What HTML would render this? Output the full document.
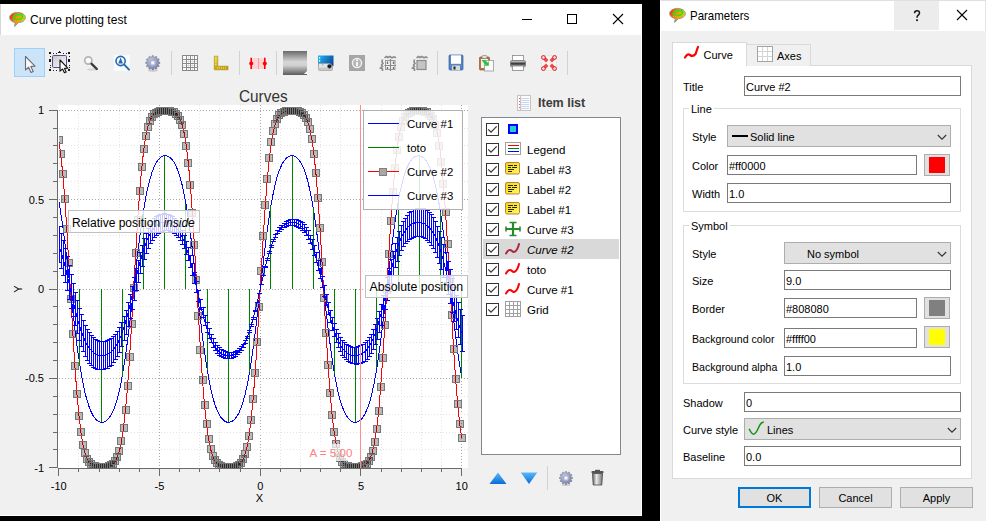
<!DOCTYPE html>
<html><head><meta charset="utf-8"><title>Curve plotting test</title>
<style>
*{margin:0;padding:0;box-sizing:border-box}
html,body{width:986px;height:521px;overflow:hidden;background:#000;font-family:"Liberation Sans",sans-serif;font-size:11px;color:#000;position:relative}
.a{position:absolute}
.t{position:absolute;white-space:nowrap;line-height:1}
.fld{position:absolute;background:#fff;border:1px solid #7a7a7a}
.fld span{position:absolute;left:3px;top:3px;white-space:nowrap;line-height:12px}
.cmb{position:absolute;background:#e1e1e1;border:1px solid #adadad}
.btn{position:absolute;background:#e1e1e1;border:1px solid #adadad;text-align:center;line-height:18px}
.grp{position:absolute;border:1px solid #dcdcdc}
.grp .lbl{position:absolute;top:-6px;left:5px;background:#fff;padding:0 2px;line-height:12px}
</style></head><body>
<!-- ================= LEFT WINDOW ================= -->
<div class="a" style="left:0;top:4px;width:642px;height:512px;background:#f0f0f0;border-right:1px solid #fff;border-bottom:1px solid #fff"></div>
<div class="a" style="left:0;top:4px;width:641px;height:31px;background:#fff;border-left:1px solid #d8d8d8"></div>
<svg class="a" style="left:9px;top:12px" width="17" height="15" viewBox="0 0 17 15"><defs><linearGradient id="gapp" x1="0" y1="0" x2="1" y2="0.3"><stop offset="0" stop-color="#ff1a00"/><stop offset="0.5" stop-color="#ff8a00"/><stop offset="1" stop-color="#d8d400"/></linearGradient></defs><path d="M8.5,0.6 C13.2,0.6 16.3,2.7 16.3,5.6 C16.3,8.4 13.4,10.4 9.4,10.6 L5.6,14.4 L6.3,10.5 C2.9,10 0.7,8 0.7,5.6 C0.7,2.7 3.8,0.6 8.5,0.6Z" fill="url(#gapp)" stroke="#8a8a8a" stroke-width="0.9"/><ellipse cx="9" cy="5.2" rx="4.6" ry="2.4" transform="rotate(-15 9 5.2)" fill="none" stroke="#20e820" stroke-width="1.6"/><path d="M4,8.6 H13" stroke="#ffa020" stroke-width="1" stroke-dasharray="1 1"/></svg>

<div class="t" style="left:30px;top:14px;font-size:12px">Curve plotting test</div>
<svg class="a" style="left:500px;top:4px" width="141" height="31" shape-rendering="crispEdges">
<line x1="22" y1="15.5" x2="32" y2="15.5" stroke="#000"/>
<rect x="67.5" y="10.5" width="9" height="9" fill="none" stroke="#000"/>
</svg>
<svg class="a" style="left:500px;top:4px" width="141" height="31">
<path d="M113,10 L123,20 M123,10 L113,20" stroke="#000" stroke-width="1.1"/>
</svg>

<!-- toolbar -->
<div class="a" style="left:14px;top:48px;width:31px;height:29px;background:#cce4f7;border:1px solid #99d1ff"></div>
<svg class="a" style="left:0;top:40px" width="642" height="45" viewBox="0 40 642 45">
<defs>
<linearGradient id="grul" x1="0" y1="0" x2="0.3" y2="1"><stop offset="0" stop-color="#e8d838"/><stop offset="1" stop-color="#c0a010"/></linearGradient>
<linearGradient id="gcm" x1="0" y1="0" x2="0" y2="1"><stop offset="0" stop-color="#6a6a6a"/><stop offset="0.45" stop-color="#d6d6d6"/><stop offset="0.6" stop-color="#d0d0d0"/><stop offset="1" stop-color="#5a5a5a"/></linearGradient>
<linearGradient id="gsel" x1="0" y1="0" x2="1" y2="1"><stop offset="0" stop-color="#c8c8c8"/><stop offset="1" stop-color="#fafafa"/></linearGradient>
<linearGradient id="gsnap" x1="0" y1="0.3" x2="1" y2="0.7"><stop offset="0" stop-color="#20b0f0"/><stop offset="1" stop-color="#0a4a98"/></linearGradient>
<radialGradient id="ginfo" cx="0.5" cy="0.5" r="0.7"><stop offset="0" stop-color="#d8d8d8"/><stop offset="1" stop-color="#909090"/></radialGradient>
<linearGradient id="gprn" x1="0" y1="0" x2="0" y2="1"><stop offset="0" stop-color="#f0f0f0"/><stop offset="0.5" stop-color="#303030"/><stop offset="1" stop-color="#e0e0e0"/></linearGradient>
<radialGradient id="ggear" cx="0.4" cy="0.35" r="0.7"><stop offset="0" stop-color="#c8cce0"/><stop offset="1" stop-color="#7078a0"/></radialGradient>
</defs>
<!-- 1 arrow cursor -->
<path d="M25.5,56.5 L25.5,70 L28.6,67.2 L31,72.5 L33.2,71.5 L30.9,66.4 L35,66.2 Z" fill="#fafafa" stroke="#6a6a78" stroke-width="1.1" stroke-linejoin="round"/>
<!-- 2 selection rect -->
<g fill="#1a1a1a" shape-rendering="crispEdges">
<rect x="49" y="52" width="2" height="2"/><rect x="68" y="52" width="2" height="2"/><rect x="49" y="69" width="2" height="2"/><rect x="68" y="69" width="2" height="2"/>
<rect x="58" y="52" width="3" height="1"/><rect x="59" y="51" width="1" height="1"/>
<rect x="49" y="59" width="2" height="3"/><rect x="68" y="59" width="2" height="3"/>
<rect x="53" y="53" width="1" height="1"/><rect x="56" y="53" width="1" height="1"/><rect x="63" y="53" width="1" height="1"/><rect x="66" y="53" width="1" height="1"/><rect x="53" y="70" width="1" height="1"/><rect x="56" y="70" width="1" height="1"/><rect x="65" y="70" width="1" height="1"/><rect x="50" y="56" width="1" height="1"/><rect x="69" y="56" width="1" height="1"/><rect x="50" y="65" width="1" height="1"/><rect x="69" y="65" width="1" height="1"/><rect x="50" y="67" width="1" height="1"/><rect x="69" y="67" width="1" height="1"/>
</g>
<rect x="52.5" y="55.5" width="14" height="12" rx="1.2" fill="url(#gsel)" stroke="#5a4c8c"/>
<path d="M60,60 L60,71.2 L62.6,69 L64.4,72.8 L66.2,72 L64.5,68.4 L67.8,68.2 Z" fill="#fff" stroke="#111" stroke-width="1.1" stroke-linejoin="round"/>
<!-- 3 magnifier -->
<ellipse cx="92" cy="69.5" rx="5" ry="1" fill="rgba(0,0,0,0.12)"/>
<circle cx="88.3" cy="60.5" r="3.6" fill="#fafafa" stroke="#b4b4b4" stroke-width="1.7"/>
<line x1="91.6" y1="63.8" x2="96.8" y2="69" stroke="#3a3a3a" stroke-width="2.4" stroke-linecap="round"/>
<!-- 4 autoscale -->
<rect x="114" y="55" width="16" height="16" fill="#f6fcff"/>
<circle cx="120.6" cy="61" r="4.6" fill="none" stroke="#2a68b0" stroke-width="1.6"/>
<path d="M118.2,63.6 L120.6,57.6 L123,63.6 Z" fill="#2a68b0"/>
<line x1="124.2" y1="64.6" x2="129" y2="69.6" stroke="#2a68b0" stroke-width="2" stroke-linecap="round"/>
<!-- 5 gear -->
<ellipse cx="152.8" cy="70.5" rx="5" ry="1.2" fill="rgba(0,0,0,0.15)"/>
<g transform="translate(152.8,62.8)">
<path d="M5.47,-1.22 L7.18,-0.53 L7.18,0.53 L5.47,1.22 L5.34,1.67 L6.48,3.13 L5.95,4.05 L4.12,3.79 L3.79,4.12 L4.05,5.95 L3.13,6.48 L1.67,5.34 L1.22,5.47 L0.53,7.18 L-0.53,7.18 L-1.22,5.47 L-1.67,5.34 L-3.13,6.48 L-4.05,5.95 L-3.79,4.12 L-4.12,3.79 L-5.95,4.05 L-6.48,3.13 L-5.34,1.67 L-5.47,1.22 L-7.18,0.53 L-7.18,-0.53 L-5.47,-1.22 L-5.34,-1.67 L-6.48,-3.13 L-5.95,-4.05 L-4.12,-3.79 L-3.79,-4.12 L-4.05,-5.95 L-3.13,-6.48 L-1.67,-5.34 L-1.22,-5.47 L-0.53,-7.18 L0.53,-7.18 L1.22,-5.47 L1.67,-5.34 L3.13,-6.48 L4.05,-5.95 L3.79,-4.12 L4.12,-3.79 L5.95,-4.05 L6.48,-3.13 L5.34,-1.67Z" fill="url(#ggear)" stroke="#6a7090" stroke-width="0.5"/>
<circle r="3.4" fill="#a8aed0"/>
<rect x="-1.6" y="-1.6" width="3.2" height="3.2" fill="#fafafa"/>
</g>
<!-- separator -->
<g fill="#d2d2d2"><rect x="171" y="51" width="1" height="24"/><rect x="239" y="51" width="1" height="24"/><rect x="276" y="51" width="1" height="24"/><rect x="437" y="51" width="1" height="24"/><rect x="567" y="51" width="1" height="24"/></g>
<!-- 6 grid -->
<g shape-rendering="crispEdges" fill="none">
<rect x="182.5" y="55.5" width="15" height="15" fill="#fff" stroke="#8a8a8a"/>
<path d="M188.5,56V70M192.5,56V70M183,61.5H197M183,65.5H197" stroke="#e0e0e0"/>
<path d="M186.5,56V70M190.5,56V70M194.5,56V70M183,59.5H197M183,63.5H197M183,67.5H197" stroke="#8a8a8a"/>
</g>
<!-- 7 ruler -->
<path d="M214.3,56.2 L217.8,56.2 L217.8,66.2 L228,66.2 L228,69.8 L214.3,69.8 Z" fill="url(#grul)" stroke="#a88a10" stroke-width="0.6"/>
<g fill="#f8f080"><rect x="215.3" y="58" width="1" height="1"/><rect x="215.3" y="60" width="1" height="1"/><rect x="215.3" y="62" width="1" height="1"/><rect x="215.3" y="64" width="1" height="1"/><rect x="217" y="67.5" width="1" height="1"/><rect x="219" y="67.5" width="1" height="1"/><rect x="221" y="67.5" width="1" height="1"/><rect x="223" y="67.5" width="1" height="1"/><rect x="225" y="67.5" width="1" height="1"/></g>
<!-- 8 range -->
<rect x="252" y="58" width="13" height="11" fill="#ffd4d4"/>
<path d="M258.5,58.5V69" stroke="#ff6060" stroke-dasharray="1 1"/>
<g stroke="#ff0000" stroke-width="1.6"><path d="M251.2,57.8V69M264.8,57.8V69"/></g>
<circle cx="251.2" cy="63.4" r="2" fill="#f00"/><circle cx="264.8" cy="63.4" r="2" fill="#f00"/>
<!-- 9 colormap -->
<rect x="283" y="51" width="24" height="24" fill="url(#gcm)"/>
<path d="M304,74 L307,71 L307,74 Z" fill="#fff"/>
<!-- 10 snapshot -->
<path d="M318,55.5 H333.5 V66 H318 Z" fill="url(#gsnap)"/>
<rect x="319" y="57" width="1.2" height="1.6" fill="#fff"/><rect x="319" y="60" width="1.2" height="1.6" fill="#fff"/>
<path d="M318.5,63.5 H330 L332.5,66 V69.5 Q332.5,70.5 331.5,70.5 H319.5 Q318.5,70.5 318.5,69.5 Z" fill="#e4e4e4" stroke="#9a9a9a" stroke-width="0.7"/>
<rect x="319" y="67.5" width="13" height="2.5" fill="#c8c8c8"/>
<circle cx="329.5" cy="66.3" r="2.1" fill="#1a1a1a" stroke="#888" stroke-width="0.5"/>
<rect x="322" y="64.5" width="1.5" height="1" fill="#40c0e0"/>
<!-- 11 info -->
<rect x="349" y="55" width="16" height="16" fill="#a6a6a6"/>
<circle cx="357" cy="63" r="4.6" fill="#b8b8b8" stroke="#f4f4f4" stroke-width="1.3"/>
<rect x="356.2" y="62" width="1.7" height="4.2" fill="#fff"/><rect x="356.2" y="59.4" width="1.7" height="1.6" fill="#fff"/>
<!-- 12/13 cross sections -->
<g fill="none" stroke="#8c8c8c">
<path d="M382.5,59.5 L382,62 L383,63.5 L381.5,65 L382.5,66.5 L380.5,68 L382.5,69 L382.5,71" stroke-width="1.6"/>
<path d="M384.5,57.8 L386.5,56.5 L388,57.5 L390,56.5 L392,57.8 L394,56.8 L396,57.8" stroke-width="1.6"/>
<rect x="385.5" y="60.5" width="9.5" height="9" fill="#f4f4f4" stroke="#9a9a9a" stroke-width="1"/>
<path d="M390.5,59V71M384.5,65.5H396" stroke="#8a8a8a" stroke-width="1.2"/>
<path d="M387.5,61.5V64M393.5,61.5V64M387.5,67V69M393.5,67V69" stroke="#707070" stroke-width="1.4"/>
<path d="M414.5,59.5 L414,62 L415,63.5 L413.5,65 L414.5,66.5 L412.5,68 L414.5,69 L414.5,71" stroke-width="1.6"/>
<path d="M416.5,57.8 L418.5,56.5 L420,57.5 L422,56.5 L424,57.8 L426,56.8 L427.5,57.8" stroke-width="1.6"/>
<rect x="417" y="60.5" width="9" height="9" fill="#c4c4c4" stroke="#8a8a8a" stroke-width="1.2"/>
</g>
<!-- 14 save -->
<rect x="449" y="55" width="14" height="15" rx="1" fill="#5884c4" stroke="#34609e" stroke-width="0.7"/>
<rect x="451" y="55.3" width="10" height="8.5" fill="#fff"/>
<rect x="452" y="65.5" width="8" height="4.5" fill="#d8d8d8"/><rect x="453.5" y="66.5" width="2" height="3" fill="#222"/>
<!-- 15 copy -->
<rect x="479.5" y="57" width="10" height="13" rx="1" fill="#b07840" stroke="#7a4a20" stroke-width="0.6"/>
<rect x="482" y="55.5" width="5" height="3" rx="1" fill="#e0e0e0" stroke="#666" stroke-width="0.5"/>
<rect x="481" y="59" width="7" height="9" fill="#f4f4f4"/>
<rect x="484.5" y="60.5" width="9" height="10.5" fill="#fafafa" stroke="#8a8a8a" stroke-width="0.7"/>
<path d="M481.5,60 L485,60 L487.5,62.5 L488.8,61.2 L488.8,65.8 L484.2,65.8 L485.5,64.5 L483,62 Z" fill="#30c040"/>
<!-- 16 printer -->
<rect x="512.5" y="55.5" width="11" height="5" fill="#fff" stroke="#888" stroke-width="0.8"/>
<rect x="510.5" y="60.5" width="15" height="6.5" rx="1.5" fill="url(#gprn)" stroke="#777" stroke-width="0.8"/>
<rect x="512.5" y="66" width="11" height="4.5" fill="#fff" stroke="#888" stroke-width="0.8"/>
<!-- 17 fullscreen -->
<rect x="541.5" y="55.5" width="15" height="15" rx="2.5" fill="#f4f4f4" stroke="#e0e0e0" stroke-width="0.6"/>
<g stroke="#f04848" stroke-width="3.4" stroke-linecap="butt"><path d="M543.8,57.8L547.2,61.2M554.2,57.8L550.8,61.2M543.8,68.2L547.2,64.8M554.2,68.2L550.8,64.8"/></g>
<g fill="#ffd0d0" stroke="#d42a2a" stroke-width="1"><circle cx="543.4" cy="57.4" r="1.9"/><circle cx="554.6" cy="57.4" r="1.9"/><circle cx="543.4" cy="68.6" r="1.9"/><circle cx="554.6" cy="68.6" r="1.9"/></g>
</svg>


<!-- plot -->
<svg class="a" style="left:0;top:0" width="642" height="516">
<rect x="58" y="105" width="410" height="363" fill="#fff"/>
<clipPath id="cc"><rect x="59" y="105" width="409" height="363"/></clipPath><g clip-path="url(#cc)"><g shape-rendering="crispEdges" stroke-width="1"><line x1="58.5" y1="104.5" x2="58.5" y2="468" stroke="#a8a8a8" stroke-dasharray="1 2"/><line x1="78.5" y1="104.5" x2="78.5" y2="468" stroke="#e4e4e4" stroke-dasharray="1 2"/><line x1="99.5" y1="104.5" x2="99.5" y2="468" stroke="#e4e4e4" stroke-dasharray="1 2"/><line x1="119.5" y1="104.5" x2="119.5" y2="468" stroke="#e4e4e4" stroke-dasharray="1 2"/><line x1="139.5" y1="104.5" x2="139.5" y2="468" stroke="#e4e4e4" stroke-dasharray="1 2"/><line x1="159.5" y1="104.5" x2="159.5" y2="468" stroke="#a8a8a8" stroke-dasharray="1 2"/><line x1="179.5" y1="104.5" x2="179.5" y2="468" stroke="#e4e4e4" stroke-dasharray="1 2"/><line x1="199.5" y1="104.5" x2="199.5" y2="468" stroke="#e4e4e4" stroke-dasharray="1 2"/><line x1="219.5" y1="104.5" x2="219.5" y2="468" stroke="#e4e4e4" stroke-dasharray="1 2"/><line x1="240.5" y1="104.5" x2="240.5" y2="468" stroke="#e4e4e4" stroke-dasharray="1 2"/><line x1="260.5" y1="104.5" x2="260.5" y2="468" stroke="#a8a8a8" stroke-dasharray="1 2"/><line x1="280.5" y1="104.5" x2="280.5" y2="468" stroke="#e4e4e4" stroke-dasharray="1 2"/><line x1="300.5" y1="104.5" x2="300.5" y2="468" stroke="#e4e4e4" stroke-dasharray="1 2"/><line x1="320.5" y1="104.5" x2="320.5" y2="468" stroke="#e4e4e4" stroke-dasharray="1 2"/><line x1="340.5" y1="104.5" x2="340.5" y2="468" stroke="#e4e4e4" stroke-dasharray="1 2"/><line x1="360.5" y1="104.5" x2="360.5" y2="468" stroke="#a8a8a8" stroke-dasharray="1 2"/><line x1="381.5" y1="104.5" x2="381.5" y2="468" stroke="#e4e4e4" stroke-dasharray="1 2"/><line x1="401.5" y1="104.5" x2="401.5" y2="468" stroke="#e4e4e4" stroke-dasharray="1 2"/><line x1="421.5" y1="104.5" x2="421.5" y2="468" stroke="#e4e4e4" stroke-dasharray="1 2"/><line x1="441.5" y1="104.5" x2="441.5" y2="468" stroke="#e4e4e4" stroke-dasharray="1 2"/><line x1="461.5" y1="104.5" x2="461.5" y2="468" stroke="#a8a8a8" stroke-dasharray="1 2"/><line x1="59" y1="449.5" x2="468" y2="449.5" stroke="#e4e4e4" stroke-dasharray="1 2"/><line x1="59" y1="432.5" x2="468" y2="432.5" stroke="#e4e4e4" stroke-dasharray="1 2"/><line x1="59" y1="414.5" x2="468" y2="414.5" stroke="#e4e4e4" stroke-dasharray="1 2"/><line x1="59" y1="396.5" x2="468" y2="396.5" stroke="#e4e4e4" stroke-dasharray="1 2"/><line x1="59" y1="378.5" x2="468" y2="378.5" stroke="#a8a8a8" stroke-dasharray="1 2"/><line x1="59" y1="360.5" x2="468" y2="360.5" stroke="#e4e4e4" stroke-dasharray="1 2"/><line x1="59" y1="342.5" x2="468" y2="342.5" stroke="#e4e4e4" stroke-dasharray="1 2"/><line x1="59" y1="324.5" x2="468" y2="324.5" stroke="#e4e4e4" stroke-dasharray="1 2"/><line x1="59" y1="306.5" x2="468" y2="306.5" stroke="#e4e4e4" stroke-dasharray="1 2"/><line x1="59" y1="289.5" x2="468" y2="289.5" stroke="#a8a8a8" stroke-dasharray="1 2"/><line x1="59" y1="271.5" x2="468" y2="271.5" stroke="#e4e4e4" stroke-dasharray="1 2"/><line x1="59" y1="253.5" x2="468" y2="253.5" stroke="#e4e4e4" stroke-dasharray="1 2"/><line x1="59" y1="235.5" x2="468" y2="235.5" stroke="#e4e4e4" stroke-dasharray="1 2"/><line x1="59" y1="217.5" x2="468" y2="217.5" stroke="#e4e4e4" stroke-dasharray="1 2"/><line x1="59" y1="199.5" x2="468" y2="199.5" stroke="#a8a8a8" stroke-dasharray="1 2"/><line x1="59" y1="181.5" x2="468" y2="181.5" stroke="#e4e4e4" stroke-dasharray="1 2"/><line x1="59" y1="163.5" x2="468" y2="163.5" stroke="#e4e4e4" stroke-dasharray="1 2"/><line x1="59" y1="145.5" x2="468" y2="145.5" stroke="#e4e4e4" stroke-dasharray="1 2"/><line x1="59" y1="128.5" x2="468" y2="128.5" stroke="#e4e4e4" stroke-dasharray="1 2"/><line x1="59" y1="110.5" x2="468" y2="110.5" stroke="#a8a8a8" stroke-dasharray="1 2"/></g>
<path d="M58.7,200.5 L60.7,212.6 L62.8,226.4 L64.8,241.8 L66.8,258.5 L68.8,276.0 L70.9,294.0 L72.9,311.8 L74.9,328.9 L76.9,344.9 L79.0,359.4 L81.0,372.3 L83.0,383.4 L85.0,392.8 L87.1,400.5 L89.1,406.8 L91.1,411.8 L93.1,415.6 L95.2,418.5 L97.2,420.5 L99.2,421.7 L101.2,422.3 L103.3,422.2 L105.3,421.4 L107.3,420.0 L109.3,417.7 L111.4,414.6 L113.4,410.5 L115.4,405.1 L117.4,398.4 L119.5,390.2 L121.5,380.3 L123.5,368.7 L125.5,355.3 L127.6,340.3 L129.6,323.9 L131.6,306.6 L133.6,288.7 L135.7,270.8 L137.7,253.5 L139.7,237.1 L141.8,222.2 L143.8,208.9 L145.8,197.3 L147.8,187.5 L149.9,179.3 L151.9,172.7 L153.9,167.4 L155.9,163.3 L158.0,160.2 L160.0,158.0 L162.0,156.5 L164.0,155.8 L166.1,155.7 L168.1,156.3 L170.1,157.6 L172.1,159.6 L174.2,162.5 L176.2,166.4 L178.2,171.4 L180.2,177.7 L182.3,185.5 L184.3,195.0 L186.3,206.1 L188.3,219.1 L190.4,233.7 L192.4,249.7 L194.4,266.9 L196.4,284.7 L198.5,302.6 L200.5,320.1 L202.5,336.7 L204.5,352.1 L206.6,365.8 L208.6,377.9 L210.6,388.1 L212.6,396.7 L214.7,403.7 L216.7,409.4 L218.7,413.8 L220.7,417.1 L222.8,419.5 L224.8,421.2 L226.8,422.1 L228.8,422.3 L230.9,421.9 L232.9,420.8 L234.9,419.0 L236.9,416.3 L239.0,412.7 L241.0,408.0 L243.0,402.1 L245.0,394.7 L247.1,385.6 L249.1,374.9 L251.1,362.4 L253.1,348.3 L255.2,332.6 L257.2,315.7 L259.2,298.0 L261.2,280.0 L263.3,262.3 L265.3,245.4 L267.3,229.7 L269.3,215.6 L271.4,203.1 L273.4,192.4 L275.4,183.3 L277.4,175.9 L279.5,170.0 L281.5,165.3 L283.5,161.7 L285.5,159.0 L287.6,157.2 L289.6,156.1 L291.6,155.7 L293.6,155.9 L295.7,156.8 L297.7,158.5 L299.7,160.9 L301.7,164.2 L303.8,168.6 L305.8,174.3 L307.8,181.3 L309.8,189.9 L311.9,200.1 L313.9,212.2 L315.9,225.9 L317.9,241.3 L320.0,257.9 L322.0,275.4 L324.0,293.3 L326.0,311.1 L328.1,328.3 L330.1,344.3 L332.1,358.9 L334.1,371.9 L336.2,383.0 L338.2,392.5 L340.2,400.3 L342.2,406.6 L344.3,411.6 L346.3,415.5 L348.3,418.4 L350.3,420.4 L352.4,421.7 L354.4,422.3 L356.4,422.2 L358.4,421.5 L360.5,420.0 L362.5,417.8 L364.5,414.7 L366.5,410.6 L368.6,405.3 L370.6,398.7 L372.6,390.5 L374.6,380.7 L376.7,369.1 L378.7,355.8 L380.7,340.9 L382.7,324.5 L384.8,307.2 L386.8,289.3 L388.8,271.4 L390.8,254.1 L392.9,237.7 L394.9,222.7 L396.9,209.3 L398.9,197.7 L401.0,187.8 L403.0,179.6 L405.0,172.9 L407.0,167.5 L409.1,163.4 L411.1,160.3 L413.1,158.0 L415.1,156.6 L417.2,155.8 L419.2,155.7 L421.2,156.3 L423.2,157.5 L425.3,159.5 L427.3,162.4 L429.3,166.2 L431.3,171.2 L433.4,177.5 L435.4,185.2 L437.4,194.6 L439.4,205.7 L441.5,218.6 L443.5,233.1 L445.5,249.1 L447.5,266.2 L449.6,284.0 L451.6,302.0 L453.6,319.5 L455.6,336.2 L457.7,351.6 L459.7,365.4 L461.7,377.5" fill="none" stroke="#0000ff" stroke-width="1" shape-rendering="crispEdges"/>
<path d="M58.5,289.0V200.5M79.5,289.0V365.7M101.5,289.0V422.3M122.5,289.0V375.6M143.5,289.0V210.2M164.5,289.0V155.7M185.5,289.0V204.3M207.5,289.0V369.8M228.5,289.0V422.3M249.5,289.0V371.8M270.5,289.0V206.2M292.5,289.0V155.7M313.5,289.0V208.2M334.5,289.0V373.7M355.5,289.0V422.3M376.5,289.0V367.8M398.5,289.0V202.4M419.5,289.0V155.7M440.5,289.0V212.3M461.5,289.0V377.5" fill="none" stroke="#008000" stroke-width="1" shape-rendering="crispEdges"/>
<path d="M58.7,139.6 L60.7,154.2 L62.8,173.8 L64.8,199.0 L66.8,229.2 L68.8,263.2 L70.9,298.9 L72.9,334.0 L74.9,366.1 L76.9,393.6 L79.0,415.7 L81.0,432.5 L83.0,444.6 L85.0,453.0 L87.1,458.5 L89.1,462.1 L91.1,464.3 L93.1,465.7 L95.2,466.5 L97.2,466.9 L99.2,467.1 L101.2,467.2 L103.3,467.2 L105.3,467.1 L107.3,466.8 L109.3,466.3 L111.4,465.3 L113.4,463.8 L115.4,461.2 L117.4,457.2 L119.5,450.9 L121.5,441.5 L123.5,428.1 L125.5,409.8 L127.6,386.1 L129.6,357.1 L131.6,323.9 L133.6,288.4 L135.7,252.9 L137.7,219.8 L139.7,191.0 L141.8,167.5 L143.8,149.4 L145.8,136.1 L147.8,126.9 L149.9,120.7 L151.9,116.7 L153.9,114.1 L155.9,112.6 L158.0,111.7 L160.0,111.2 L162.0,110.9 L164.0,110.8 L166.1,110.8 L168.1,110.9 L170.1,111.1 L172.1,111.6 L174.2,112.4 L176.2,113.7 L178.2,116.0 L180.2,119.6 L182.3,125.3 L184.3,133.7 L186.3,146.0 L188.3,163.0 L190.4,185.3 L192.4,212.9 L194.4,245.2 L196.4,280.3 L198.5,316.1 L200.5,350.0 L202.5,380.0 L204.5,404.9 L206.6,424.4 L208.6,438.9 L210.6,449.1 L212.6,456.0 L214.7,460.5 L216.7,463.3 L218.7,465.1 L220.7,466.1 L222.8,466.7 L224.8,467.0 L226.8,467.2 L228.8,467.2 L230.9,467.2 L232.9,467.0 L234.9,466.6 L236.9,465.9 L239.0,464.7 L241.0,462.7 L243.0,459.5 L245.0,454.4 L247.1,446.8 L249.1,435.6 L251.1,419.9 L253.1,399.0 L255.2,372.7 L257.2,341.5 L259.2,306.9 L261.2,271.1 L263.3,236.5 L265.3,205.3 L267.3,179.0 L269.3,158.1 L271.4,142.4 L273.4,131.2 L275.4,123.6 L277.4,118.5 L279.5,115.3 L281.5,113.3 L283.5,112.1 L285.5,111.4 L287.6,111.0 L289.6,110.8 L291.6,110.8 L293.6,110.8 L295.7,111.0 L297.7,111.3 L299.7,111.9 L301.7,112.9 L303.8,114.7 L305.8,117.5 L307.8,122.0 L309.8,128.9 L311.9,139.1 L313.9,153.6 L315.9,173.1 L317.9,198.0 L320.0,228.0 L322.0,261.9 L324.0,297.7 L326.0,332.8 L328.1,365.1 L330.1,392.7 L332.1,415.0 L334.1,432.0 L336.2,444.3 L338.2,452.7 L340.2,458.4 L342.2,462.0 L344.3,464.3 L346.3,465.6 L348.3,466.4 L350.3,466.9 L352.4,467.1 L354.4,467.2 L356.4,467.2 L358.4,467.1 L360.5,466.8 L362.5,466.3 L364.5,465.4 L366.5,463.9 L368.6,461.3 L370.6,457.3 L372.6,451.1 L374.6,441.9 L376.7,428.6 L378.7,410.5 L380.7,387.0 L382.7,358.2 L384.8,325.1 L386.8,289.6 L388.8,254.1 L390.8,220.9 L392.9,191.9 L394.9,168.2 L396.9,149.9 L398.9,136.5 L401.0,127.1 L403.0,120.8 L405.0,116.8 L407.0,114.2 L409.1,112.7 L411.1,111.7 L413.1,111.2 L415.1,110.9 L417.2,110.8 L419.2,110.8 L421.2,110.9 L423.2,111.1 L425.3,111.5 L427.3,112.3 L429.3,113.7 L431.3,115.9 L433.4,119.5 L435.4,125.0 L437.4,133.4 L439.4,145.5 L441.5,162.3 L443.5,184.4 L445.5,211.9 L447.5,244.0 L449.6,279.1 L451.6,314.8 L453.6,348.8 L455.6,379.0 L457.7,404.2 L459.7,423.8 L461.7,438.4" fill="none" stroke="#ff0000" stroke-width="1" shape-rendering="crispEdges"/>
<g fill="rgba(0,0,0,0.27)" stroke="#777" stroke-width="1" shape-rendering="crispEdges"><rect x="55.5" y="136.5" width="7" height="7"/><rect x="57.5" y="150.5" width="7" height="7"/><rect x="59.5" y="170.5" width="7" height="7"/><rect x="61.5" y="195.5" width="7" height="7"/><rect x="63.5" y="225.5" width="7" height="7"/><rect x="65.5" y="259.5" width="7" height="7"/><rect x="67.5" y="295.5" width="7" height="7"/><rect x="69.5" y="330.5" width="7" height="7"/><rect x="71.5" y="362.5" width="7" height="7"/><rect x="73.5" y="390.5" width="7" height="7"/><rect x="75.5" y="412.5" width="7" height="7"/><rect x="77.5" y="428.5" width="7" height="7"/><rect x="79.5" y="441.5" width="7" height="7"/><rect x="81.5" y="449.5" width="7" height="7"/><rect x="83.5" y="455.5" width="7" height="7"/><rect x="85.5" y="458.5" width="7" height="7"/><rect x="87.5" y="460.5" width="7" height="7"/><rect x="89.5" y="462.5" width="7" height="7"/><rect x="91.5" y="462.5" width="7" height="7"/><rect x="93.5" y="463.5" width="7" height="7"/><rect x="95.5" y="463.5" width="7" height="7"/><rect x="97.5" y="463.5" width="7" height="7"/><rect x="99.5" y="463.5" width="7" height="7"/><rect x="101.5" y="463.5" width="7" height="7"/><rect x="103.5" y="463.5" width="7" height="7"/><rect x="105.5" y="462.5" width="7" height="7"/><rect x="107.5" y="461.5" width="7" height="7"/><rect x="109.5" y="460.5" width="7" height="7"/><rect x="111.5" y="457.5" width="7" height="7"/><rect x="113.5" y="453.5" width="7" height="7"/><rect x="115.5" y="447.5" width="7" height="7"/><rect x="117.5" y="437.5" width="7" height="7"/><rect x="120.5" y="424.5" width="7" height="7"/><rect x="122.5" y="406.5" width="7" height="7"/><rect x="124.5" y="382.5" width="7" height="7"/><rect x="126.5" y="353.5" width="7" height="7"/><rect x="128.5" y="320.5" width="7" height="7"/><rect x="130.5" y="284.5" width="7" height="7"/><rect x="132.5" y="249.5" width="7" height="7"/><rect x="134.5" y="216.5" width="7" height="7"/><rect x="136.5" y="187.5" width="7" height="7"/><rect x="138.5" y="163.5" width="7" height="7"/><rect x="140.5" y="145.5" width="7" height="7"/><rect x="142.5" y="132.5" width="7" height="7"/><rect x="144.5" y="123.5" width="7" height="7"/><rect x="146.5" y="117.5" width="7" height="7"/><rect x="148.5" y="113.5" width="7" height="7"/><rect x="150.5" y="110.5" width="7" height="7"/><rect x="152.5" y="109.5" width="7" height="7"/><rect x="154.5" y="108.5" width="7" height="7"/><rect x="156.5" y="107.5" width="7" height="7"/><rect x="158.5" y="107.5" width="7" height="7"/><rect x="160.5" y="107.5" width="7" height="7"/><rect x="162.5" y="107.5" width="7" height="7"/><rect x="164.5" y="107.5" width="7" height="7"/><rect x="166.5" y="107.5" width="7" height="7"/><rect x="168.5" y="108.5" width="7" height="7"/><rect x="170.5" y="108.5" width="7" height="7"/><rect x="172.5" y="110.5" width="7" height="7"/><rect x="174.5" y="112.5" width="7" height="7"/><rect x="176.5" y="116.5" width="7" height="7"/><rect x="178.5" y="121.5" width="7" height="7"/><rect x="180.5" y="130.5" width="7" height="7"/><rect x="182.5" y="142.5" width="7" height="7"/><rect x="184.5" y="159.5" width="7" height="7"/><rect x="186.5" y="181.5" width="7" height="7"/><rect x="188.5" y="209.5" width="7" height="7"/><rect x="190.5" y="241.5" width="7" height="7"/><rect x="192.5" y="276.5" width="7" height="7"/><rect x="194.5" y="312.5" width="7" height="7"/><rect x="196.5" y="346.5" width="7" height="7"/><rect x="199.5" y="376.5" width="7" height="7"/><rect x="201.5" y="401.5" width="7" height="7"/><rect x="203.5" y="420.5" width="7" height="7"/><rect x="205.5" y="435.5" width="7" height="7"/><rect x="207.5" y="445.5" width="7" height="7"/><rect x="209.5" y="452.5" width="7" height="7"/><rect x="211.5" y="456.5" width="7" height="7"/><rect x="213.5" y="459.5" width="7" height="7"/><rect x="215.5" y="461.5" width="7" height="7"/><rect x="217.5" y="462.5" width="7" height="7"/><rect x="219.5" y="463.5" width="7" height="7"/><rect x="221.5" y="463.5" width="7" height="7"/><rect x="223.5" y="463.5" width="7" height="7"/><rect x="225.5" y="463.5" width="7" height="7"/><rect x="227.5" y="463.5" width="7" height="7"/><rect x="229.5" y="463.5" width="7" height="7"/><rect x="231.5" y="463.5" width="7" height="7"/><rect x="233.5" y="462.5" width="7" height="7"/><rect x="235.5" y="461.5" width="7" height="7"/><rect x="237.5" y="459.5" width="7" height="7"/><rect x="239.5" y="455.5" width="7" height="7"/><rect x="241.5" y="450.5" width="7" height="7"/><rect x="243.5" y="443.5" width="7" height="7"/><rect x="245.5" y="432.5" width="7" height="7"/><rect x="247.5" y="416.5" width="7" height="7"/><rect x="249.5" y="395.5" width="7" height="7"/><rect x="251.5" y="369.5" width="7" height="7"/><rect x="253.5" y="338.5" width="7" height="7"/><rect x="255.5" y="303.5" width="7" height="7"/><rect x="257.5" y="267.5" width="7" height="7"/><rect x="259.5" y="232.5" width="7" height="7"/><rect x="261.5" y="201.5" width="7" height="7"/><rect x="263.5" y="175.5" width="7" height="7"/><rect x="265.5" y="154.5" width="7" height="7"/><rect x="267.5" y="138.5" width="7" height="7"/><rect x="269.5" y="127.5" width="7" height="7"/><rect x="271.5" y="120.5" width="7" height="7"/><rect x="273.5" y="115.5" width="7" height="7"/><rect x="275.5" y="111.5" width="7" height="7"/><rect x="277.5" y="109.5" width="7" height="7"/><rect x="280.5" y="108.5" width="7" height="7"/><rect x="282.5" y="107.5" width="7" height="7"/><rect x="284.5" y="107.5" width="7" height="7"/><rect x="286.5" y="107.5" width="7" height="7"/><rect x="288.5" y="107.5" width="7" height="7"/><rect x="290.5" y="107.5" width="7" height="7"/><rect x="292.5" y="107.5" width="7" height="7"/><rect x="294.5" y="107.5" width="7" height="7"/><rect x="296.5" y="108.5" width="7" height="7"/><rect x="298.5" y="109.5" width="7" height="7"/><rect x="300.5" y="111.5" width="7" height="7"/><rect x="302.5" y="114.5" width="7" height="7"/><rect x="304.5" y="118.5" width="7" height="7"/><rect x="306.5" y="125.5" width="7" height="7"/><rect x="308.5" y="135.5" width="7" height="7"/><rect x="310.5" y="150.5" width="7" height="7"/><rect x="312.5" y="169.5" width="7" height="7"/><rect x="314.5" y="194.5" width="7" height="7"/><rect x="316.5" y="224.5" width="7" height="7"/><rect x="318.5" y="258.5" width="7" height="7"/><rect x="320.5" y="294.5" width="7" height="7"/><rect x="322.5" y="329.5" width="7" height="7"/><rect x="324.5" y="361.5" width="7" height="7"/><rect x="326.5" y="389.5" width="7" height="7"/><rect x="328.5" y="411.5" width="7" height="7"/><rect x="330.5" y="428.5" width="7" height="7"/><rect x="332.5" y="440.5" width="7" height="7"/><rect x="334.5" y="449.5" width="7" height="7"/><rect x="336.5" y="454.5" width="7" height="7"/><rect x="338.5" y="458.5" width="7" height="7"/><rect x="340.5" y="460.5" width="7" height="7"/><rect x="342.5" y="462.5" width="7" height="7"/><rect x="344.5" y="462.5" width="7" height="7"/><rect x="346.5" y="463.5" width="7" height="7"/><rect x="348.5" y="463.5" width="7" height="7"/><rect x="350.5" y="463.5" width="7" height="7"/><rect x="352.5" y="463.5" width="7" height="7"/><rect x="354.5" y="463.5" width="7" height="7"/><rect x="356.5" y="463.5" width="7" height="7"/><rect x="358.5" y="462.5" width="7" height="7"/><rect x="361.5" y="461.5" width="7" height="7"/><rect x="363.5" y="460.5" width="7" height="7"/><rect x="365.5" y="457.5" width="7" height="7"/><rect x="367.5" y="453.5" width="7" height="7"/><rect x="369.5" y="447.5" width="7" height="7"/><rect x="371.5" y="438.5" width="7" height="7"/><rect x="373.5" y="425.5" width="7" height="7"/><rect x="375.5" y="407.5" width="7" height="7"/><rect x="377.5" y="383.5" width="7" height="7"/><rect x="379.5" y="354.5" width="7" height="7"/><rect x="381.5" y="321.5" width="7" height="7"/><rect x="383.5" y="286.5" width="7" height="7"/><rect x="385.5" y="250.5" width="7" height="7"/><rect x="387.5" y="217.5" width="7" height="7"/><rect x="389.5" y="188.5" width="7" height="7"/><rect x="391.5" y="164.5" width="7" height="7"/><rect x="393.5" y="146.5" width="7" height="7"/><rect x="395.5" y="133.5" width="7" height="7"/><rect x="397.5" y="123.5" width="7" height="7"/><rect x="399.5" y="117.5" width="7" height="7"/><rect x="401.5" y="113.5" width="7" height="7"/><rect x="403.5" y="110.5" width="7" height="7"/><rect x="405.5" y="109.5" width="7" height="7"/><rect x="407.5" y="108.5" width="7" height="7"/><rect x="409.5" y="107.5" width="7" height="7"/><rect x="411.5" y="107.5" width="7" height="7"/><rect x="413.5" y="107.5" width="7" height="7"/><rect x="415.5" y="107.5" width="7" height="7"/><rect x="417.5" y="107.5" width="7" height="7"/><rect x="419.5" y="107.5" width="7" height="7"/><rect x="421.5" y="108.5" width="7" height="7"/><rect x="423.5" y="108.5" width="7" height="7"/><rect x="425.5" y="110.5" width="7" height="7"/><rect x="427.5" y="112.5" width="7" height="7"/><rect x="429.5" y="115.5" width="7" height="7"/><rect x="431.5" y="121.5" width="7" height="7"/><rect x="433.5" y="129.5" width="7" height="7"/><rect x="435.5" y="142.5" width="7" height="7"/><rect x="437.5" y="158.5" width="7" height="7"/><rect x="439.5" y="180.5" width="7" height="7"/><rect x="442.5" y="208.5" width="7" height="7"/><rect x="444.5" y="240.5" width="7" height="7"/><rect x="446.5" y="275.5" width="7" height="7"/><rect x="448.5" y="311.5" width="7" height="7"/><rect x="450.5" y="345.5" width="7" height="7"/><rect x="452.5" y="375.5" width="7" height="7"/><rect x="454.5" y="400.5" width="7" height="7"/><rect x="456.5" y="420.5" width="7" height="7"/><rect x="458.5" y="434.5" width="7" height="7"/></g>
<path d="M58.7,244.8 L60.7,250.8 L62.8,257.7 L64.8,265.4 L66.8,273.7 L68.8,282.5 L70.9,291.5 L72.9,300.4 L74.9,308.9 L76.9,316.9 L79.0,324.2 L81.0,330.6 L83.0,336.2 L85.0,340.9 L87.1,344.8 L89.1,347.9 L91.1,350.4 L93.1,352.3 L95.2,353.7 L97.2,354.7 L99.2,355.4 L101.2,355.6 L103.3,355.6 L105.3,355.2 L107.3,354.5 L109.3,353.4 L111.4,351.8 L113.4,349.7 L115.4,347.1 L117.4,343.7 L119.5,339.6 L121.5,334.7 L123.5,328.8 L125.5,322.1 L127.6,314.6 L129.6,306.5 L131.6,297.8 L133.6,288.8 L135.7,279.9 L137.7,271.2 L139.7,263.1 L141.8,255.6 L143.8,248.9 L145.8,243.2 L147.8,238.2 L149.9,234.2 L151.9,230.8 L153.9,228.2 L155.9,226.1 L158.0,224.6 L160.0,223.5 L162.0,222.8 L164.0,222.4 L166.1,222.4 L168.1,222.7 L170.1,223.3 L172.1,224.3 L174.2,225.7 L176.2,227.7 L178.2,230.2 L180.2,233.4 L182.3,237.3 L184.3,242.0 L186.3,247.6 L188.3,254.0 L190.4,261.3 L192.4,269.4 L194.4,277.9 L196.4,286.8 L198.5,295.8 L200.5,304.6 L202.5,312.9 L204.5,320.5 L206.6,327.4 L208.6,333.4 L210.6,338.6 L212.6,342.9 L214.7,346.4 L216.7,349.2 L218.7,351.4 L220.7,353.1 L222.8,354.3 L224.8,355.1 L226.8,355.5 L228.8,355.7 L230.9,355.5 L232.9,354.9 L234.9,354.0 L236.9,352.7 L239.0,350.9 L241.0,348.5 L243.0,345.5 L245.0,341.8 L247.1,337.3 L249.1,332.0 L251.1,325.7 L253.1,318.6 L255.2,310.8 L257.2,302.3 L259.2,293.5 L261.2,284.5 L263.3,275.7 L265.3,267.2 L267.3,259.4 L269.3,252.3 L271.4,246.0 L273.4,240.7 L275.4,236.2 L277.4,232.5 L279.5,229.5 L281.5,227.1 L283.5,225.3 L285.5,224.0 L287.6,223.1 L289.6,222.5 L291.6,222.3 L293.6,222.5 L295.7,222.9 L297.7,223.7 L299.7,224.9 L301.7,226.6 L303.8,228.8 L305.8,231.6 L307.8,235.1 L309.8,239.4 L311.9,244.6 L313.9,250.6 L315.9,257.5 L317.9,265.1 L320.0,273.4 L322.0,282.2 L324.0,291.2 L326.0,300.1 L328.1,308.6 L330.1,316.7 L332.1,324.0 L334.1,330.4 L336.2,336.0 L338.2,340.7 L340.2,344.6 L342.2,347.8 L344.3,350.3 L346.3,352.3 L348.3,353.7 L350.3,354.7 L352.4,355.3 L354.4,355.6 L356.4,355.6 L358.4,355.2 L360.5,354.5 L362.5,353.4 L364.5,351.9 L366.5,349.8 L368.6,347.2 L370.6,343.8 L372.6,339.8 L374.6,334.8 L376.7,329.1 L378.7,322.4 L380.7,314.9 L382.7,306.8 L384.8,298.1 L386.8,289.2 L388.8,280.2 L390.8,271.5 L392.9,263.4 L394.9,255.9 L396.9,249.2 L398.9,243.3 L401.0,238.4 L403.0,234.3 L405.0,230.9 L407.0,228.3 L409.1,226.2 L411.1,224.6 L413.1,223.5 L415.1,222.8 L417.2,222.4 L419.2,222.4 L421.2,222.6 L423.2,223.3 L425.3,224.3 L427.3,225.7 L429.3,227.6 L431.3,230.1 L433.4,233.2 L435.4,237.1 L437.4,241.8 L439.4,247.4 L441.5,253.8 L443.5,261.1 L445.5,269.1 L447.5,277.6 L449.6,286.5 L451.6,295.5 L453.6,304.3 L455.6,312.6 L457.7,320.3 L459.7,327.2 L461.7,333.2" fill="none" stroke="#0000ff" stroke-width="1" shape-rendering="crispEdges"/>
<path d="M59.5,263V226M57.0,262.5h5M57.0,226.5h5M61.5,269V233M59.0,268.5h5M59.0,233.5h5M63.5,276V240M61.0,275.5h5M61.0,240.5h5M65.5,283V248M63.0,282.5h5M63.0,248.5h5M67.5,291V256M65.0,290.5h5M65.0,256.5h5M69.5,300V265M67.0,299.5h5M67.0,265.5h5M71.5,309V274M69.0,308.5h5M69.0,274.5h5M73.5,317V283M71.0,316.5h5M71.0,283.5h5M75.5,326V292M73.0,325.5h5M73.0,292.5h5M77.5,334V300M75.0,333.5h5M75.0,300.5h5M79.5,341V308M77.0,340.5h5M77.0,308.5h5M81.5,347V314M79.0,346.5h5M79.0,314.5h5M83.5,352V320M81.0,351.5h5M81.0,320.5h5M85.5,357V325M83.0,356.5h5M83.0,325.5h5M87.5,361V329M85.0,360.5h5M85.0,329.5h5M89.5,364V332M87.0,363.5h5M87.0,332.5h5M91.5,366V335M89.0,365.5h5M89.0,335.5h5M93.5,368V337M91.0,367.5h5M91.0,337.5h5M95.5,369V339M93.0,368.5h5M93.0,339.5h5M97.5,370V340M95.0,369.5h5M95.0,340.5h5M99.5,370V341M97.0,369.5h5M97.0,341.5h5M101.5,370V341M99.0,369.5h5M99.0,341.5h5M103.5,370V341M101.0,369.5h5M101.0,341.5h5M105.5,369V341M103.0,368.5h5M103.0,341.5h5M107.5,369V340M105.0,368.5h5M105.0,340.5h5M109.5,367V339M107.0,366.5h5M107.0,339.5h5M111.5,366V338M109.0,365.5h5M109.0,338.5h5M113.5,363V336M111.0,362.5h5M111.0,336.5h5M115.5,360V334M113.0,359.5h5M113.0,334.5h5M117.5,357V331M115.0,356.5h5M115.0,331.5h5M119.5,353V327M117.0,352.5h5M117.0,327.5h5M121.5,347V322M119.0,346.5h5M119.0,322.5h5M124.5,341V316M122.0,340.5h5M122.0,316.5h5M126.5,335V310M124.0,334.5h5M124.0,310.5h5M128.5,327V302M126.0,326.5h5M126.0,302.5h5M130.5,319V294M128.0,318.5h5M128.0,294.5h5M132.5,310V286M130.0,309.5h5M130.0,286.5h5M134.5,301V277M132.0,300.5h5M132.0,277.5h5M136.5,291V268M134.0,290.5h5M134.0,268.5h5M138.5,283V260M136.0,282.5h5M136.0,260.5h5M140.5,274V252M138.0,273.5h5M138.0,252.5h5M142.5,267V245M140.0,266.5h5M140.0,245.5h5M144.5,260V238M142.0,259.5h5M142.0,238.5h5M146.5,254V233M144.0,253.5h5M144.0,233.5h5M148.5,249V228M146.0,248.5h5M146.0,228.5h5M150.5,244V224M148.0,243.5h5M148.0,224.5h5M152.5,241V221M150.0,240.5h5M150.0,221.5h5M154.5,238V218M152.0,237.5h5M152.0,218.5h5M156.5,236V216M154.0,235.5h5M154.0,216.5h5M158.5,234V215M156.0,233.5h5M156.0,215.5h5M160.5,233V214M158.0,232.5h5M158.0,214.5h5M162.5,232V214M160.0,231.5h5M160.0,214.5h5M164.5,231V213M162.0,230.5h5M162.0,213.5h5M166.5,231V214M164.0,230.5h5M164.0,214.5h5M168.5,231V214M166.0,230.5h5M166.0,214.5h5M170.5,232V215M168.0,231.5h5M168.0,215.5h5M172.5,233V216M170.0,232.5h5M170.0,216.5h5M174.5,234V218M172.0,233.5h5M172.0,218.5h5M176.5,236V220M174.0,235.5h5M174.0,220.5h5M178.5,238V222M176.0,237.5h5M176.0,222.5h5M180.5,241V226M178.0,240.5h5M178.0,226.5h5M182.5,245V230M180.0,244.5h5M180.0,230.5h5M184.5,249V235M182.0,248.5h5M182.0,235.5h5M186.5,255V241M184.0,254.5h5M184.0,241.5h5M188.5,261V247M186.0,260.5h5M186.0,247.5h5M190.5,268V255M188.0,267.5h5M188.0,255.5h5M192.5,276V263M190.0,275.5h5M190.0,263.5h5M194.5,284V272M192.0,283.5h5M192.0,272.5h5M196.5,293V281M194.0,292.5h5M194.0,281.5h5M198.5,302V290M196.0,301.5h5M196.0,290.5h5M200.5,310V299M198.0,309.5h5M198.0,299.5h5M203.5,318V307M201.0,317.5h5M201.0,307.5h5M205.5,326V315M203.0,325.5h5M203.0,315.5h5M207.5,333V322M205.0,332.5h5M205.0,322.5h5M209.5,339V328M207.0,338.5h5M207.0,328.5h5M211.5,343V334M209.0,342.5h5M209.0,334.5h5M213.5,348V338M211.0,347.5h5M211.0,338.5h5M215.5,351V342M213.0,350.5h5M213.0,342.5h5M217.5,354V345M215.0,353.5h5M215.0,345.5h5M219.5,356V347M217.0,355.5h5M217.0,347.5h5M221.5,357V349M219.0,356.5h5M219.0,349.5h5M223.5,358V350M221.0,357.5h5M221.0,350.5h5M225.5,359V351M223.0,358.5h5M223.0,351.5h5M227.5,359V352M225.0,358.5h5M225.0,352.5h5M229.5,359V352M227.0,358.5h5M227.0,352.5h5M231.5,359V352M229.0,358.5h5M229.0,352.5h5M233.5,358V352M231.0,357.5h5M231.0,352.5h5M235.5,357V351M233.0,356.5h5M233.0,351.5h5M237.5,355V350M235.0,354.5h5M235.0,350.5h5M239.5,353V348M237.0,352.5h5M237.0,348.5h5M241.5,351V346M239.0,350.5h5M239.0,346.5h5M243.5,348V344M241.0,347.5h5M241.0,344.5h5M245.5,344V340M243.0,343.5h5M243.0,340.5h5M247.5,339V336M245.0,338.5h5M245.0,336.5h5M249.5,333V330M247.0,332.5h5M247.0,330.5h5M251.5,327V324M249.0,326.5h5M249.0,324.5h5M253.5,320V317M251.0,319.5h5M251.0,317.5h5M255.5,312V310M253.0,311.5h5M253.0,310.5h5M257.5,303V302M255.0,302.5h5M255.0,302.5h5M259.5,294V293M257.0,293.5h5M257.0,293.5h5M261.5,285V284M259.0,284.5h5M259.0,284.5h5M263.5,276V275M261.0,275.5h5M261.0,275.5h5M265.5,268V266M263.0,267.5h5M263.0,266.5h5M267.5,261V258M265.0,260.5h5M265.0,258.5h5M269.5,254V251M267.0,253.5h5M267.0,251.5h5M271.5,248V245M269.0,247.5h5M269.0,245.5h5M273.5,242V239M271.0,241.5h5M271.0,239.5h5M275.5,238V234M273.0,237.5h5M273.0,234.5h5M277.5,234V230M275.0,233.5h5M275.0,230.5h5M279.5,232V227M277.0,231.5h5M277.0,227.5h5M281.5,230V225M279.0,229.5h5M279.0,225.5h5M284.5,228V223M282.0,227.5h5M282.0,223.5h5M286.5,227V221M284.0,226.5h5M284.0,221.5h5M288.5,226V220M286.0,225.5h5M286.0,220.5h5M290.5,226V219M288.0,225.5h5M288.0,219.5h5M292.5,226V219M290.0,225.5h5M290.0,219.5h5M294.5,226V219M292.0,225.5h5M292.0,219.5h5M296.5,227V219M294.0,226.5h5M294.0,219.5h5M298.5,228V220M296.0,227.5h5M296.0,220.5h5M300.5,229V221M298.0,228.5h5M298.0,221.5h5M302.5,231V222M300.0,230.5h5M300.0,222.5h5M304.5,233V224M302.0,232.5h5M302.0,224.5h5M306.5,236V227M304.0,235.5h5M304.0,227.5h5M308.5,240V230M306.0,239.5h5M306.0,230.5h5M310.5,244V235M308.0,243.5h5M308.0,235.5h5M312.5,250V239M310.0,249.5h5M310.0,239.5h5M314.5,256V245M312.0,255.5h5M312.0,245.5h5M316.5,263V252M314.0,262.5h5M314.0,252.5h5M318.5,271V260M316.0,270.5h5M316.0,260.5h5M320.5,279V268M318.0,278.5h5M318.0,268.5h5M322.5,288V276M320.0,287.5h5M320.0,276.5h5M324.5,297V285M322.0,296.5h5M322.0,285.5h5M326.5,306V294M324.0,305.5h5M324.0,294.5h5M328.5,315V302M326.0,314.5h5M326.0,302.5h5M330.5,323V310M328.0,322.5h5M328.0,310.5h5M332.5,331V317M330.0,330.5h5M330.0,317.5h5M334.5,337V323M332.0,336.5h5M332.0,323.5h5M336.5,343V329M334.0,342.5h5M334.0,329.5h5M338.5,348V333M336.0,347.5h5M336.0,333.5h5M340.5,352V337M338.0,351.5h5M338.0,337.5h5M342.5,356V340M340.0,355.5h5M340.0,340.5h5M344.5,358V342M342.0,357.5h5M342.0,342.5h5M346.5,360V344M344.0,359.5h5M344.0,344.5h5M348.5,362V345M346.0,361.5h5M346.0,345.5h5M350.5,363V346M348.0,362.5h5M348.0,346.5h5M352.5,364V347M350.0,363.5h5M350.0,347.5h5M354.5,364V347M352.0,363.5h5M352.0,347.5h5M356.5,365V347M354.0,364.5h5M354.0,347.5h5M358.5,364V346M356.0,363.5h5M356.0,346.5h5M360.5,364V345M358.0,363.5h5M358.0,345.5h5M362.5,363V344M360.0,362.5h5M360.0,344.5h5M365.5,362V342M363.0,361.5h5M363.0,342.5h5M367.5,360V340M365.0,359.5h5M365.0,340.5h5M369.5,357V337M367.0,356.5h5M367.0,337.5h5M371.5,354V334M369.0,353.5h5M369.0,334.5h5M373.5,350V329M371.0,349.5h5M371.0,329.5h5M375.5,345V324M373.0,344.5h5M373.0,324.5h5M377.5,340V318M375.0,339.5h5M375.0,318.5h5M379.5,333V311M377.0,332.5h5M377.0,311.5h5M381.5,326V304M379.0,325.5h5M379.0,304.5h5M383.5,318V295M381.0,317.5h5M381.0,295.5h5M385.5,310V287M383.0,309.5h5M383.0,287.5h5M387.5,301V277M385.0,300.5h5M385.0,277.5h5M389.5,292V268M387.0,291.5h5M387.0,268.5h5M391.5,284V259M389.0,283.5h5M389.0,259.5h5M393.5,276V251M391.0,275.5h5M391.0,251.5h5M395.5,268V243M393.0,267.5h5M393.0,243.5h5M397.5,262V237M395.0,261.5h5M395.0,237.5h5M399.5,256V231M397.0,255.5h5M397.0,231.5h5M401.5,251V225M399.0,250.5h5M399.0,225.5h5M403.5,247V221M401.0,246.5h5M401.0,221.5h5M405.5,244V218M403.0,243.5h5M403.0,218.5h5M407.5,242V215M405.0,241.5h5M405.0,215.5h5M409.5,240V212M407.0,239.5h5M407.0,212.5h5M411.5,239V211M409.0,238.5h5M409.0,211.5h5M413.5,238V209M411.0,237.5h5M411.0,209.5h5M415.5,237V209M413.0,236.5h5M413.0,209.5h5M417.5,237V208M415.0,236.5h5M415.0,208.5h5M419.5,237V208M417.0,236.5h5M417.0,208.5h5M421.5,237V208M419.0,236.5h5M419.0,208.5h5M423.5,238V208M421.0,237.5h5M421.0,208.5h5M425.5,239V209M423.0,238.5h5M423.0,209.5h5M427.5,241V210M425.0,240.5h5M425.0,210.5h5M429.5,243V212M427.0,242.5h5M427.0,212.5h5M431.5,246V214M429.0,245.5h5M429.0,214.5h5M433.5,249V217M431.0,248.5h5M431.0,217.5h5M435.5,253V221M433.0,252.5h5M433.0,221.5h5M437.5,258V226M435.0,257.5h5M435.0,226.5h5M439.5,264V231M437.0,263.5h5M437.0,231.5h5M441.5,270V237M439.0,269.5h5M439.0,237.5h5M443.5,278V244M441.0,277.5h5M441.0,244.5h5M446.5,286V252M444.0,285.5h5M444.0,252.5h5M448.5,295V261M446.0,294.5h5M446.0,261.5h5M450.5,304V269M448.0,303.5h5M448.0,269.5h5M452.5,313V278M450.0,312.5h5M450.0,278.5h5M454.5,322V287M452.0,321.5h5M452.0,287.5h5M456.5,330V295M454.0,329.5h5M454.0,295.5h5M458.5,338V302M456.0,337.5h5M456.0,302.5h5M460.5,345V309M458.0,344.5h5M458.0,309.5h5M462.5,352V315M460.0,351.5h5M460.0,315.5h5" fill="none" stroke="#0000ff" stroke-width="1" shape-rendering="crispEdges"/><!-- label inside -->
<rect x="68.5" y="210.5" width="131" height="22" fill="rgba(255,255,255,0.8)" stroke="#c0c0c0" shape-rendering="crispEdges"/>
<text x="72" y="227" font-family="Liberation Sans" font-size="12" fill="#000">Relative position <tspan font-style="italic">inside</tspan></text>
<!-- absolute -->
<rect x="365.5" y="275.5" width="102" height="22" fill="rgba(255,255,255,0.8)" stroke="#c0c0c0" shape-rendering="crispEdges"/>
<text x="369.5" y="291" font-family="Liberation Sans" font-size="12.3" fill="#000">Absolute position</text>
<!-- legend -->
<rect x="363.5" y="110.5" width="99" height="99" fill="rgba(255,255,255,0.85)" stroke="#b0b0b0" shape-rendering="crispEdges"/>
<g shape-rendering="crispEdges">
<line x1="368" y1="123.5" x2="399" y2="123.5" stroke="#0000ff" stroke-width="1.5"/>
<line x1="368" y1="147.5" x2="399" y2="147.5" stroke="#008000" stroke-width="1.5"/>
<line x1="368" y1="171.5" x2="399" y2="171.5" stroke="#ff0000" stroke-width="1.5"/>
<rect x="379.5" y="168.5" width="7" height="7" fill="#a8a8a8" stroke="#808080"/>
<line x1="368" y1="195.5" x2="399" y2="195.5" stroke="#0000ff" stroke-width="1.5"/>
</g>
<g font-family="Liberation Sans" font-size="11.4" fill="#000">
<text x="407" y="128">Curve #1</text>
<text x="407" y="152">toto</text>
<text x="407" y="176">Curve #2</text>
<text x="407" y="200">Curve #3</text>
</g>
<!-- marker -->
<line x1="360.5" y1="105" x2="360.5" y2="468" stroke="#ff8c8c" shape-rendering="crispEdges"/>
<rect x="306" y="444" width="50" height="17" fill="rgba(255,255,255,0.7)"/>
<text x="309.5" y="457" font-family="Liberation Sans" font-size="11.6" fill="#ff8080">A = 5.00</text>
</g>
<g shape-rendering="crispEdges" stroke-width="1"><line x1="57.5" y1="110" x2="57.5" y2="468" stroke="#6a6a6a"/><line x1="49" y1="467.5" x2="57" y2="467.5" stroke="#6a6a6a"/><line x1="53" y1="449.5" x2="57" y2="449.5" stroke="#6a6a6a"/><line x1="53" y1="432.5" x2="57" y2="432.5" stroke="#6a6a6a"/><line x1="53" y1="414.5" x2="57" y2="414.5" stroke="#6a6a6a"/><line x1="53" y1="396.5" x2="57" y2="396.5" stroke="#6a6a6a"/><line x1="49" y1="378.5" x2="57" y2="378.5" stroke="#6a6a6a"/><line x1="53" y1="360.5" x2="57" y2="360.5" stroke="#6a6a6a"/><line x1="53" y1="342.5" x2="57" y2="342.5" stroke="#6a6a6a"/><line x1="53" y1="324.5" x2="57" y2="324.5" stroke="#6a6a6a"/><line x1="53" y1="306.5" x2="57" y2="306.5" stroke="#6a6a6a"/><line x1="49" y1="289.5" x2="57" y2="289.5" stroke="#6a6a6a"/><line x1="53" y1="271.5" x2="57" y2="271.5" stroke="#6a6a6a"/><line x1="53" y1="253.5" x2="57" y2="253.5" stroke="#6a6a6a"/><line x1="53" y1="235.5" x2="57" y2="235.5" stroke="#6a6a6a"/><line x1="53" y1="217.5" x2="57" y2="217.5" stroke="#6a6a6a"/><line x1="49" y1="199.5" x2="57" y2="199.5" stroke="#6a6a6a"/><line x1="53" y1="181.5" x2="57" y2="181.5" stroke="#6a6a6a"/><line x1="53" y1="163.5" x2="57" y2="163.5" stroke="#6a6a6a"/><line x1="53" y1="145.5" x2="57" y2="145.5" stroke="#6a6a6a"/><line x1="53" y1="128.5" x2="57" y2="128.5" stroke="#6a6a6a"/><line x1="49" y1="110.5" x2="57" y2="110.5" stroke="#6a6a6a"/><line x1="58" y1="468.5" x2="462" y2="468.5" stroke="#6a6a6a"/><line x1="58.5" y1="468" x2="58.5" y2="476" stroke="#6a6a6a"/><line x1="78.5" y1="468" x2="78.5" y2="472" stroke="#6a6a6a"/><line x1="99.5" y1="468" x2="99.5" y2="472" stroke="#6a6a6a"/><line x1="119.5" y1="468" x2="119.5" y2="472" stroke="#6a6a6a"/><line x1="139.5" y1="468" x2="139.5" y2="472" stroke="#6a6a6a"/><line x1="159.5" y1="468" x2="159.5" y2="476" stroke="#6a6a6a"/><line x1="179.5" y1="468" x2="179.5" y2="472" stroke="#6a6a6a"/><line x1="199.5" y1="468" x2="199.5" y2="472" stroke="#6a6a6a"/><line x1="219.5" y1="468" x2="219.5" y2="472" stroke="#6a6a6a"/><line x1="240.5" y1="468" x2="240.5" y2="472" stroke="#6a6a6a"/><line x1="260.5" y1="468" x2="260.5" y2="476" stroke="#6a6a6a"/><line x1="280.5" y1="468" x2="280.5" y2="472" stroke="#6a6a6a"/><line x1="300.5" y1="468" x2="300.5" y2="472" stroke="#6a6a6a"/><line x1="320.5" y1="468" x2="320.5" y2="472" stroke="#6a6a6a"/><line x1="340.5" y1="468" x2="340.5" y2="472" stroke="#6a6a6a"/><line x1="360.5" y1="468" x2="360.5" y2="476" stroke="#6a6a6a"/><line x1="381.5" y1="468" x2="381.5" y2="472" stroke="#6a6a6a"/><line x1="401.5" y1="468" x2="401.5" y2="472" stroke="#6a6a6a"/><line x1="421.5" y1="468" x2="421.5" y2="472" stroke="#6a6a6a"/><line x1="441.5" y1="468" x2="441.5" y2="472" stroke="#6a6a6a"/><line x1="461.5" y1="468" x2="461.5" y2="476" stroke="#6a6a6a"/></g>
<g font-family="Liberation Sans" font-size="11" fill="#000"><text x="44" y="114.2" text-anchor="end">1</text><text x="44" y="203.6" text-anchor="end">0.5</text><text x="44" y="293.0" text-anchor="end">0</text><text x="44" y="382.4" text-anchor="end">-0.5</text><text x="44" y="471.8" text-anchor="end">-1</text><text x="58.7" y="489.5" text-anchor="middle">-10</text><text x="159.5" y="489.5" text-anchor="middle">-5</text><text x="260.2" y="489.5" text-anchor="middle">0</text><text x="361.0" y="489.5" text-anchor="middle">5</text><text x="461.7" y="489.5" text-anchor="middle">10</text><text x="259.5" y="502" text-anchor="middle">X</text><text transform="translate(22,289) rotate(-90)" text-anchor="middle">Y</text></g><text x="239" y="102" font-family="Liberation Sans" font-size="16.6" fill="#333" textLength="48.6" lengthAdjust="spacingAndGlyphs">Curves</text>
</svg>

<!-- item list -->
<div class="a" style="left:481px;top:117px;width:140px;height:338px;background:#fff;border:1px solid #828790"></div>
<div class="a" style="left:483px;top:239px;width:136px;height:20px;background:#d9d9d9"></div>
<svg class="a" style="left:517px;top:95px" width="15" height="16" shape-rendering="crispEdges"><rect x="0.5" y="0.5" width="13" height="14.5" fill="#fbfbfb" stroke="#c4c4c4"/><g stroke="#c4daf2"><path d="M3,3.5H12M3,5.5H12M3,7.5H12M3,9.5H12M3,11.5H12M3,13.5H12"/></g><path d="M3.5,1V15" stroke="#f4b0b0"/><g fill="#888"><rect x="2" y="3" width="1" height="1"/><rect x="2" y="6" width="1" height="1"/><rect x="2" y="9" width="1" height="1"/><rect x="2" y="12" width="1" height="1"/></g></svg>
<div class="t" style="left:538px;top:97px;font-size:12.5px;font-weight:bold;color:#3c3c3c">Item list</div>
<svg class="a" style="left:0;top:0" width="642" height="516"><defs><linearGradient id="glab" x1="0" y1="0" x2="1" y2="1"><stop offset="0" stop-color="#f0d800"/><stop offset="1" stop-color="#fff870"/></linearGradient></defs><rect x="486.5" y="123.5" width="12" height="12" fill="#fff" stroke="#333" shape-rendering="crispEdges"/><path d="M488.2,129.4 L491,132.2 L496.7,126.4" fill="none" stroke="#333" stroke-width="1.2"/><rect x="509" y="125" width="8" height="8" fill="#20d0d0" stroke="#0000ff" stroke-width="2"/><rect x="486.5" y="143.5" width="12" height="12" fill="#fff" stroke="#333" shape-rendering="crispEdges"/><path d="M488.2,149.4 L491,152.2 L496.7,146.4" fill="none" stroke="#333" stroke-width="1.2"/><rect x="505.5" y="142.5" width="15" height="12" fill="#fff" stroke="#a0a0a0" shape-rendering="crispEdges"/><path d="M507.5,145.5H518.5" stroke="#ff0000" shape-rendering="crispEdges"/><path d="M507.5,148.5H518.5" stroke="#008000" shape-rendering="crispEdges"/><path d="M507.5,151.5H518.5" stroke="#0000ff" shape-rendering="crispEdges"/><rect x="486.5" y="163.5" width="12" height="12" fill="#fff" stroke="#333" shape-rendering="crispEdges"/><path d="M488.2,169.4 L491,172.2 L496.7,166.4" fill="none" stroke="#333" stroke-width="1.2"/><rect x="505.5" y="162.5" width="14" height="11.5" rx="1.5" fill="url(#glab)" stroke="#c0803c"/><path d="M508,165.5H513M514,165.5H517M508,167.5H511M512,167.5H517M508,169.5H514M508,171.5H512" stroke="#2a2400" stroke-width="1" shape-rendering="crispEdges"/><rect x="486.5" y="183.5" width="12" height="12" fill="#fff" stroke="#333" shape-rendering="crispEdges"/><path d="M488.2,189.4 L491,192.2 L496.7,186.4" fill="none" stroke="#333" stroke-width="1.2"/><rect x="505.5" y="182.5" width="14" height="11.5" rx="1.5" fill="url(#glab)" stroke="#c0803c"/><path d="M508,185.5H513M514,185.5H517M508,187.5H511M512,187.5H517M508,189.5H514M508,191.5H512" stroke="#2a2400" stroke-width="1" shape-rendering="crispEdges"/><rect x="486.5" y="203.5" width="12" height="12" fill="#fff" stroke="#333" shape-rendering="crispEdges"/><path d="M488.2,209.4 L491,212.2 L496.7,206.4" fill="none" stroke="#333" stroke-width="1.2"/><rect x="505.5" y="202.5" width="14" height="11.5" rx="1.5" fill="url(#glab)" stroke="#c0803c"/><path d="M508,205.5H513M514,205.5H517M508,207.5H511M512,207.5H517M508,209.5H514M508,211.5H512" stroke="#2a2400" stroke-width="1" shape-rendering="crispEdges"/><rect x="486.5" y="223.5" width="12" height="12" fill="#fff" stroke="#333" shape-rendering="crispEdges"/><path d="M488.2,229.4 L491,232.2 L496.7,226.4" fill="none" stroke="#333" stroke-width="1.2"/><g stroke="#2a8a2a" stroke-width="2.2" fill="none"><path d="M513,222V236M506,229H520"/><path d="M509.5,222.5H516.5M509.5,235.5H516.5M506,226.5V231.5M520,226.5V231.5" stroke-width="1.6"/></g><rect x="486.5" y="243.5" width="12" height="12" fill="#fff" stroke="#333" shape-rendering="crispEdges"/><path d="M488.2,249.4 L491,252.2 L496.7,246.4" fill="none" stroke="#333" stroke-width="1.2"/><path d="M506,253.5 C508,250 510,249 512,251 C514,253 517,252 519,244" fill="none" stroke="#b02848" stroke-width="2" stroke-linecap="round"/><rect x="486.5" y="263.5" width="12" height="12" fill="#fff" stroke="#333" shape-rendering="crispEdges"/><path d="M488.2,269.4 L491,272.2 L496.7,266.4" fill="none" stroke="#333" stroke-width="1.2"/><path d="M506,273.5 C508,270 510,269 512,271 C514,273 517,272 519,264" fill="none" stroke="#ff0000" stroke-width="2" stroke-linecap="round"/><rect x="486.5" y="283.5" width="12" height="12" fill="#fff" stroke="#333" shape-rendering="crispEdges"/><path d="M488.2,289.4 L491,292.2 L496.7,286.4" fill="none" stroke="#333" stroke-width="1.2"/><path d="M506,293.5 C508,290 510,289 512,291 C514,293 517,292 519,284" fill="none" stroke="#ff0000" stroke-width="2" stroke-linecap="round"/><rect x="486.5" y="303.5" width="12" height="12" fill="#fff" stroke="#333" shape-rendering="crispEdges"/><path d="M488.2,309.4 L491,312.2 L496.7,306.4" fill="none" stroke="#333" stroke-width="1.2"/><g shape-rendering="crispEdges" stroke="#a0a0a0" fill="none"><rect x="505.5" y="301.5" width="15" height="15" fill="#fff"/><path d="M509.5,301.5V316.5M513.5,301.5V316.5M517.5,301.5V316.5M505.5,305.5H520.5M505.5,309.5H520.5M505.5,313.5H520.5"/></g></svg>
<div class="t" style="left:527px;top:145px;font-size:11.5px;">Legend</div>
<div class="t" style="left:527px;top:165px;font-size:11.5px;">Label #3</div>
<div class="t" style="left:527px;top:185px;font-size:11.5px;">Label #2</div>
<div class="t" style="left:527px;top:205px;font-size:11.5px;">Label #1</div>
<div class="t" style="left:527px;top:225px;font-size:11.5px;">Curve #3</div>
<div class="t" style="left:527px;top:245px;font-size:11.5px;font-style:italic;">Curve #2</div>
<div class="t" style="left:527px;top:265px;font-size:11.5px;">toto</div>
<div class="t" style="left:527px;top:285px;font-size:11.5px;">Curve #1</div>
<div class="t" style="left:527px;top:305px;font-size:11.5px;">Grid</div>
<svg class="a" style="left:480px;top:462px" width="140" height="32" viewBox="480 462 140 32">
<defs><linearGradient id="gtri" x1="0" y1="0" x2="0" y2="1"><stop offset="0" stop-color="#5ab8f8"/><stop offset="1" stop-color="#0a6ad8"/></linearGradient>
<radialGradient id="ggear2" cx="0.4" cy="0.35" r="0.7"><stop offset="0" stop-color="#c8cce0"/><stop offset="1" stop-color="#7078a0"/></radialGradient>
<linearGradient id="gtr" x1="0" y1="0" x2="1" y2="0"><stop offset="0" stop-color="#666"/><stop offset="0.4" stop-color="#e8e8e8"/><stop offset="1" stop-color="#777"/></linearGradient></defs>
<path d="M498,472.5 L506.5,484 L489.5,484 Z" fill="url(#gtri)"/>
<path d="M520.8,472.5 L537.3,472.5 L529,484 Z" fill="url(#gtri)"/>
<rect x="547" y="466" width="1" height="24" fill="#d2d2d2"/>
<ellipse cx="566" cy="485" rx="4.5" ry="1" fill="rgba(0,0,0,0.15)"/><g transform="translate(566,478)"><path d="M4.98,-1.11 L6.58,-0.48 L6.58,0.48 L4.98,1.11 L4.87,1.53 L5.94,2.87 L5.46,3.71 L3.75,3.45 L3.45,3.75 L3.71,5.46 L2.87,5.94 L1.53,4.87 L1.11,4.98 L0.48,6.58 L-0.48,6.58 L-1.11,4.98 L-1.53,4.87 L-2.87,5.94 L-3.71,5.46 L-3.45,3.75 L-3.75,3.45 L-5.46,3.71 L-5.94,2.87 L-4.87,1.53 L-4.98,1.11 L-6.58,0.48 L-6.58,-0.48 L-4.98,-1.11 L-4.87,-1.53 L-5.94,-2.87 L-5.46,-3.71 L-3.75,-3.45 L-3.45,-3.75 L-3.71,-5.46 L-2.87,-5.94 L-1.53,-4.87 L-1.11,-4.98 L-0.48,-6.58 L0.48,-6.58 L1.11,-4.98 L1.53,-4.87 L2.87,-5.94 L3.71,-5.46 L3.45,-3.75 L3.75,-3.45 L5.46,-3.71 L5.94,-2.87 L4.87,-1.53Z" fill="url(#ggear2)" stroke="#6a7090" stroke-width="0.5"/><circle r="3.1" fill="#a8aed0"/><rect x="-1.5" y="-1.5" width="3" height="3" fill="#fafafa"/></g>
<rect x="591.5" y="471" width="12" height="2.2" rx="0.8" fill="#555"/>
<rect x="595" y="469.8" width="5" height="1.8" fill="#555"/>
<path d="M592.5,473.5 L602.5,473.5 L601.8,485 L593.2,485 Z" fill="url(#gtr)" stroke="#444" stroke-width="0.8"/>
</svg>

<!-- ================= DIALOG ================= -->
<div class="a" style="left:660px;top:0;width:326px;height:521px;background:#f0f0f0;border-left:1px solid #fff;border-top:1px solid #e0e0e0"></div>
<div class="a" style="left:661px;top:1px;width:325px;height:30px;background:#fff;border-right:1px solid #e4e4e4"></div>
<div class="a" style="left:894px;top:1px;width:45px;height:29px;background:#ececec"></div>
<svg class="a" style="left:669px;top:8px" width="17" height="15" viewBox="0 0 17 15"><defs><linearGradient id="gapp2" x1="0" y1="0" x2="1" y2="0.3"><stop offset="0" stop-color="#ff1a00"/><stop offset="0.5" stop-color="#ff8a00"/><stop offset="1" stop-color="#d8d400"/></linearGradient></defs><path d="M8.5,0.6 C13.2,0.6 16.3,2.7 16.3,5.6 C16.3,8.4 13.4,10.4 9.4,10.6 L5.6,14.4 L6.3,10.5 C2.9,10 0.7,8 0.7,5.6 C0.7,2.7 3.8,0.6 8.5,0.6Z" fill="url(#gapp2)" stroke="#8a8a8a" stroke-width="0.9"/><ellipse cx="9" cy="5.2" rx="4.6" ry="2.4" transform="rotate(-15 9 5.2)" fill="none" stroke="#20e820" stroke-width="1.6"/><path d="M4,8.6 H13" stroke="#ffa020" stroke-width="1" stroke-dasharray="1 1"/></svg>
<div class="t" style="left:690px;top:10px;font-size:12.4px;transform:scaleX(0.925);transform-origin:0 0">Parameters</div>
<svg class="a" style="left:912px;top:9px" width="10" height="14"><path d="M2.6,4.2 C2.6,2.6 3.6,1.8 5,1.8 C6.5,1.8 7.5,2.7 7.5,4 C7.5,5.3 6.6,5.8 5.9,6.4 C5.2,7 5,7.5 5,8.8" fill="none" stroke="#1a1a1a" stroke-width="1.5"/><rect x="4.1" y="10.3" width="1.8" height="1.8" fill="#1a1a1a"/></svg>
<svg class="a" style="left:950px;top:4px" width="24" height="24"><path d="M7,6 L17,16 M17,6 L7,16" stroke="#000" stroke-width="1.1"/></svg>
<div class="a" style="left:672px;top:65px;width:300px;height:414px;background:#fff;border:1px solid #d9d9d9"></div>
<div class="a" style="left:746px;top:44px;width:65px;height:22px;background:#f0f0f0;border:1px solid #d9d9d9;border-bottom:none"></div>
<div class="a" style="left:672px;top:42px;width:75px;height:24px;background:#fff;border:1px solid #d9d9d9;border-bottom:none"></div>
<svg class="a" style="left:683px;top:45px" width="18" height="16"><path d="M2,12.5 C3.5,10 5,8.5 7,10 C9,11.5 11,11 12.5,9 C13.5,7 14,4 15,2" fill="none" stroke="#ff0000" stroke-width="2.2" stroke-linecap="round"/></svg>
<div class="t" style="left:703.5px;top:50px;font-size:11px">Curve</div>
<svg class="a" style="left:757px;top:46px" width="16" height="16" shape-rendering="crispEdges"><g fill="none"><rect x="0.5" y="0.5" width="15" height="15" fill="#fff" stroke="#a4a4a4"/><path d="M5.5,1V15M10.5,1V15M1,5.5H15M1,10.5H15" stroke="#d4d4d4"/></g></svg>
<div class="t" style="left:777px;top:51px;font-size:11px">Axes</div>
<div class="t" style="left:683px;top:82px;font-size:11px">Title</div>
<div class="fld" style="left:744px;top:76px;width:217px;height:20px"><span style="top:4px;left:1px">Curve #2</span></div>
<div class="grp" style="left:683px;top:108px;width:278px;height:104px"><div class="lbl">Line</div></div>
<div class="t" style="left:692px;top:132px;font-size:11px">Style</div>
<div class="cmb" style="left:727px;top:125px;width:224px;height:22px"><div class="a" style="left:4px;top:9px;width:16px;height:2px;background:#000"></div><div class="t" style="left:22px;top:6px;font-size:11px">Solid line</div><svg class="a" style="right:3px;top:8px" width="10" height="7"><path d="M0.8,1 L5,5.2 L9.2,1" fill="none" stroke="#333" stroke-width="1.1"/></svg></div>
<div class="t" style="left:692px;top:161px;font-size:11px">Color</div>
<div class="fld" style="left:727px;top:155px;width:190px;height:20px"><span style="top:4px;left:1px">#ff0000</span></div>
<div class="a" style="left:924px;top:154px;width:26px;height:22px;background:#e1e1e1;border:1px solid #adadad"><div class="a" style="left:4px;top:2px;width:16px;height:16px;background:#ff0000"></div></div>
<div class="t" style="left:692px;top:189px;font-size:11px">Width</div>
<div class="fld" style="left:727px;top:183px;width:224px;height:20px"><span style="top:4px;left:1px">1.0</span></div>
<div class="grp" style="left:683px;top:225px;width:278px;height:159px"><div class="lbl">Symbol</div></div>
<div class="t" style="left:692px;top:249px;font-size:11px">Style</div>
<div class="cmb" style="left:784px;top:242px;width:167px;height:22px"><div class="t" style="left:22px;top:6px;font-size:11px">No symbol</div><svg class="a" style="right:3px;top:8px" width="10" height="7"><path d="M0.8,1 L5,5.2 L9.2,1" fill="none" stroke="#333" stroke-width="1.1"/></svg></div>
<div class="t" style="left:692px;top:276px;font-size:11px">Size</div>
<div class="fld" style="left:784px;top:270px;width:167px;height:20px"><span style="top:4px;left:1px">9.0</span></div>
<div class="t" style="left:692px;top:304px;font-size:11px">Border</div>
<div class="fld" style="left:784px;top:298px;width:133px;height:20px"><span style="top:4px;left:1px">#808080</span></div>
<div class="a" style="left:924px;top:297px;width:26px;height:22px;background:#e1e1e1;border:1px solid #adadad"><div class="a" style="left:4px;top:2px;width:16px;height:16px;background:#808080"></div></div>
<div class="t" style="left:692px;top:334px;font-size:10.6px">Background color</div>
<div class="fld" style="left:784px;top:328px;width:133px;height:20px"><span style="top:4px;left:1px">#ffff00</span></div>
<div class="a" style="left:924px;top:326px;width:26px;height:22px;background:#e1e1e1;border:1px solid #adadad"><div class="a" style="left:4px;top:2px;width:16px;height:16px;background:#ffff00"></div></div>
<div class="t" style="left:692px;top:362px;font-size:10.6px">Background alpha</div>
<div class="fld" style="left:784px;top:356px;width:167px;height:20px"><span style="top:4px;left:1px">1.0</span></div>
<div class="t" style="left:683px;top:398px;font-size:11px">Shadow</div>
<div class="fld" style="left:744px;top:392px;width:217px;height:20px"><span style="top:4px;left:1px">0</span></div>
<div class="t" style="left:683px;top:425px;font-size:11px">Curve style</div>
<div class="cmb" style="left:744px;top:418px;width:217px;height:22px"><svg class="a" style="left:3px;top:1px" width="18" height="17"><path d="M1.2,8.8 C2.6,11.5 3.6,14.2 5.6,14.2 C8,14.2 9.8,9.5 11.3,6 C12.4,3.5 13.8,2.2 15.8,2" fill="none" stroke="#109010" stroke-width="1.5"/></svg><div class="t" style="left:22px;top:6px;font-size:11px">Lines</div><svg class="a" style="right:3px;top:8px" width="10" height="7"><path d="M0.8,1 L5,5.2 L9.2,1" fill="none" stroke="#333" stroke-width="1.1"/></svg></div>
<div class="t" style="left:683px;top:452px;font-size:11px">Baseline</div>
<div class="fld" style="left:744px;top:446px;width:217px;height:20px"><span style="top:4px;left:1px">0.0</span></div>
<div class="btn" style="left:738px;top:487px;width:73px;height:21px;border:2px solid #0078d7;line-height:19px">OK</div>
<div class="btn" style="left:819px;top:487px;width:73px;height:21px;line-height:21px">Cancel</div>
<div class="btn" style="left:900px;top:487px;width:73px;height:21px;line-height:21px">Apply</div>
</body></html>
